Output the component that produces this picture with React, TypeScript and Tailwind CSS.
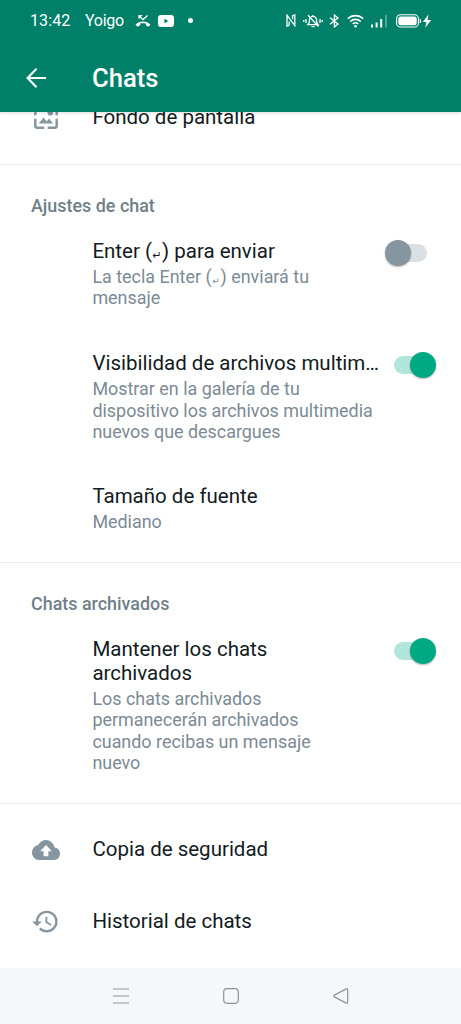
import type { ReactNode } from 'react';
import { MdHistory } from 'react-icons/md';

interface SwitchProps {
  on?: boolean;
}

function Switch({ on = false }: SwitchProps) {
  return (
    <div className={`flex w-[42px] shrink-0 items-center ${on ? 'flex-row-reverse' : ''}`}>
      <div
        className={`z-10 h-[26px] w-[26px] shrink-0 rounded-full shadow-[0_1px_2px_rgba(0,0,0,0.3)] ${
          on ? 'bg-[#00a884]' : 'bg-[#8696a0]'
        }`}
      />
      <div className={`h-[18px] w-[33px] shrink-0 rounded-full ${on ? '-mr-[17px] bg-[#b2e5d9]' : '-ml-[17px] bg-[#dae0e3]'}`} />
    </div>
  );
}

interface SettingProps {
  title: ReactNode;
  lines: ReactNode[];
  className?: string;
  children?: ReactNode;
}

function Setting({ title, lines, className = '', children }: SettingProps) {
  return (
    <div className={`flex items-start pl-[92.4px] ${className}`}>
      <div className="min-w-0 flex-1 whitespace-nowrap">
        <p className="text-[20.5px] leading-[24px] text-[#111b21]">{title}</p>
        <div className="mt-[3px] text-[17.92px] leading-[21.2px] text-[#7b8a94]">
          {lines.map((line, i) => (
            <p key={i}>{line}</p>
          ))}
        </div>
      </div>
      {children}
    </div>
  );
}

function EnterKey({ small = false }: { small?: boolean }) {
  return (
    <span className={`relative top-px inline-block text-center font-['DejaVu_Sans'] leading-none ${small ? 'w-[9px] text-[9px]' : 'w-[10px] text-[11px]'}`}>
      ↵
    </span>
  );
}

function StatusBar() {
  return (
    <div className="flex h-[41px] items-center pl-[30px] text-white">
      <span className="w-[55px] text-[16px] tracking-[0.1px]">13:42</span>
      <span className="w-[50px] text-[16px] tracking-[-0.3px]">Yoigo</span>
      {/* Missed call */}
      <svg width="16" height="14" viewBox="0 0 16 14" fill="none" stroke="currentColor">
        <path d="M4 1.6l4 4 4.5-4M4 4.8V1.6h3.2" strokeWidth="1.3" />
        <path
          d="M.5 10.6C4.600 6.400 11.400 6.400 15.500 10.600L13.500 12.700L10.800 11.200V9.500C9 9 7 9 5.200 9.500V11.200L2.500 12.700Z"
          fill="currentColor"
          stroke="none"
        />
      </svg>
      {/* YouTube */}
      <svg className="ml-[7px]" width="16" height="12" viewBox="0 0 16 12">
        <rect width="16" height="12" rx="3" fill="white" />
        <path d="M6.400 3.700v4.600l4-2.300z" fill="#008069" />
      </svg>
      <div className="ml-[14px] h-[5px] w-[5px] rounded-full bg-white" />
      {/* NFC */}
      <svg className="ml-[93px]" width="10" height="13" viewBox="0 0 10 13" fill="none" stroke="currentColor" strokeWidth="1.300">
        <path d="M3.200 11.300L1 12V1.200L8.800 11.600V.8L6.600 1.600V5M3.200 7.500v3.800" />
      </svg>
      {/* Muted bell */}
      <svg className="ml-[7px]" width="20" height="14" viewBox="0 0 20 14" fill="none" stroke="currentColor" strokeWidth="1.300">
        <path d="M4.800 10.700h10.400l-1.600-2.500V6A3.600 3.600 0 0 0 6.400 6v2.200zM10 2.700V1M8.500 12.700h3M5 1.200l10.500 11.300M3 5v4M.8 6v2M17 5v4M19.200 6v2" />
      </svg>
      {/* Bluetooth */}
      <svg className="ml-[6px]" width="11" height="14" viewBox="0 0 11 14" fill="none" stroke="currentColor" strokeWidth="1.3">
        <path d="M1 3.800l8 6.200-3.600 3V1L9 4 1 10.200" />
      </svg>
      {/* Wi-Fi */}
      <svg className="ml-[7px]" width="17" height="14" viewBox="0 0 17 14" fill="none" stroke="currentColor" strokeWidth="1.6">
        <path d="M.8 4.800a11 11 0 0 1 15.400 0M3.200 7.500a7.600 7.600 0 0 1 10.600 0M5.700 10a4.200 4.200 0 0 1 5.600 0" />
        <circle cx="8.500" cy="12.200" r="1.300" fill="currentColor" stroke="none" />
      </svg>
      {/* Signal */}
      <svg className="ml-[7px]" width="17" height="14" viewBox="0 0 17 14" fill="currentColor">
        <rect x="0" y="10.500" width="2" height="3" />
        <rect x="4.600" y="8.500" width="2" height="5" />
        <rect x="9.200" y="5" width="2" height="8.500" />
        <rect x="14" y="1" width="2" height="12.500" opacity="0.3" />
      </svg>
      {/* Battery */}
      <svg className="ml-[8px]" width="36" height="14" viewBox="0 0 36 14" fill="none">
        <rect x=".6" y=".8" width="21.800" height="12.200" rx="3.800" stroke="white" strokeWidth="1.100" />
        <rect x="2.300" y="2.500" width="18.400" height="8.800" rx="2.300" fill="white" />
        <path d="M23.800 5q1.600 2 0 4" stroke="white" strokeWidth="1.200" />
        <path d="M32.600.4L26.800 8h3.600l-1.200 5.700L35.200 6h-3.700z" fill="white" />
      </svg>
    </div>
  );
}

function WallpaperIcon() {
  return (
    <svg width="24" height="24" viewBox="0 0 24 24" fill="none" stroke="#8696a0" strokeWidth="2.500">
      <path d="M10.300 1.300H3.300a2 2 0 0 0-2 2v7M13.700 1.300h7a2 2 0 0 1 2 2v7M1.300 13.700v7a2 2 0 0 0 2 2h7M13.700 22.700h7a2 2 0 0 0 2-2v-7" />
      <circle cx="16.300" cy="7.800" r="2.800" fill="#8696a0" stroke="none" />
      <path d="M4.800 18.600l4.700-6 3.200 4 2.300-3 4.200 5z" fill="#8696a0" stroke="none" />
    </svg>
  );
}

function CloudIcon() {
  return (
    <svg className="mt-[2px]" width="28" height="20" viewBox="0 4 24 16" preserveAspectRatio="none" fill="#8696a0">
      <path d="M19.350 10.040A7.490 7.490 0 0 0 12 4C9.110 4 6.600 5.640 5.350 8.040A5.994 5.994 0 0 0 0 14c0 3.310 2.690 6 6 6h13c2.760 0 5-2.240 5-5 0-2.640-2.050-4.780-4.650-4.960zM14 13v4h-4v-4H7l5-5 5 5h-3z" />
    </svg>
  );
}

interface LinkRowProps {
  icon: ReactNode;
  label: string;
}

function LinkRow({ icon, label }: LinkRowProps) {
  return (
    <div className="flex h-[72px] items-center">
      <div className="flex w-[92.4px] justify-center">{icon}</div>
      <span className="text-[20.5px] leading-[24px] text-[#111b21]">{label}</span>
    </div>
  );
}

function SectionTitle({ children }: { children: ReactNode }) {
  return (
    <h2 className="border-t border-[#eceeef] pt-[30px] pl-[31px] text-[17.92px] leading-[21px] font-medium text-[#6f7f89]">
      {children}
    </h2>
  );
}

export default function App() {
  return (
    <div className="flex h-[1024px] w-[461px] flex-col overflow-hidden bg-white font-[Roboto,sans-serif]">
      <header className="relative z-10 h-[112px] shrink-0 bg-[#008069] text-white shadow-[0_1px_3px_rgba(0,0,0,0.15)]">
        <StatusBar />
        <div className="flex h-[73px] items-center">
          <svg className="ml-[26px]" width="20" height="20" viewBox="0 0 20 20" fill="none" stroke="currentColor" strokeWidth="2.100">
            <path d="M10.500.8L1.600 10l8.900 9.200M1.600 10H20" />
          </svg>
          <h1 className="ml-[46px] pt-[1px] text-[25.6px] font-medium">Chats</h1>
        </div>
      </header>

      <main className="min-h-0 flex-1 overflow-hidden">
        <div className="-mt-[31px] pb-[11px]">
          <LinkRow icon={<WallpaperIcon />} label="Fondo de pantalla" />
        </div>

        <SectionTitle>Ajustes de chat</SectionTitle>
        <Setting
          className="mt-[23px]"
          title={<>Enter (<EnterKey />) para enviar</>}
          lines={[<>La tecla Enter (<EnterKey small />) enviará tu</>, 'mensaje']}
        >
          <div className="mt-[1px] mr-[34px]">
            <Switch />
          </div>
        </Setting>
        <Setting
          className="mt-[43px]"
          title="Visibilidad de archivos multim…"
          lines={['Mostrar en la galería de tu', 'dispositivo los archivos multimedia', 'nuevos que descargues']}
        >
          <div className="mt-[1px] mr-[25px]">
            <Switch on />
          </div>
        </Setting>
        <Setting className="mt-[42px]" title="Tamaño de fuente" lines={['Mediano']} />

        <div className="mt-[30px]">
          <SectionTitle>Chats archivados</SectionTitle>
        </div>
        <Setting
          className="mt-[23px]"
          title={<>Mantener los chats<br />archivados</>}
          lines={['Los chats archivados', 'permanecerán archivados', 'cuando recibas un mensaje', 'nuevo']}
        >
          <div className="mt-[1px] mr-[25px]">
            <Switch on />
          </div>
        </Setting>

        <div className="mt-[30px] border-t border-[#eceeef] pt-[9px]">
          <LinkRow icon={<CloudIcon />} label="Copia de seguridad" />
          <LinkRow icon={<MdHistory size={29} color="#8696a0" className="mr-[2px]" />} label="Historial de chats" />
        </div>
      </main>

      {/* System navigation */}
      <nav className="flex h-[56px] shrink-0 items-center justify-center gap-[94px] bg-[#f5f7f9] text-[#909395]">
        <svg width="16" height="16" viewBox="0 0 16 16" stroke="currentColor" strokeWidth="1.200">
          <path d="M0 1h16M0 8h16M0 15h16" />
        </svg>
        <svg width="16" height="16" viewBox="0 0 16 16" fill="none" stroke="currentColor" strokeWidth="1.200">
          <rect x=".7" y=".7" width="14.600" height="14.600" rx="3.200" />
        </svg>
        <svg width="16" height="16" viewBox="0 0 16 16" fill="none" stroke="currentColor" strokeWidth="1.200">
          <path d="M1.400 7.100L13.200.9q1.500-.6 1.500 1v12.200q0 1.600-1.500 1L1.400 8.900q-1.300-.9 0-1.800z" />
        </svg>
      </nav>
    </div>
  );
}
